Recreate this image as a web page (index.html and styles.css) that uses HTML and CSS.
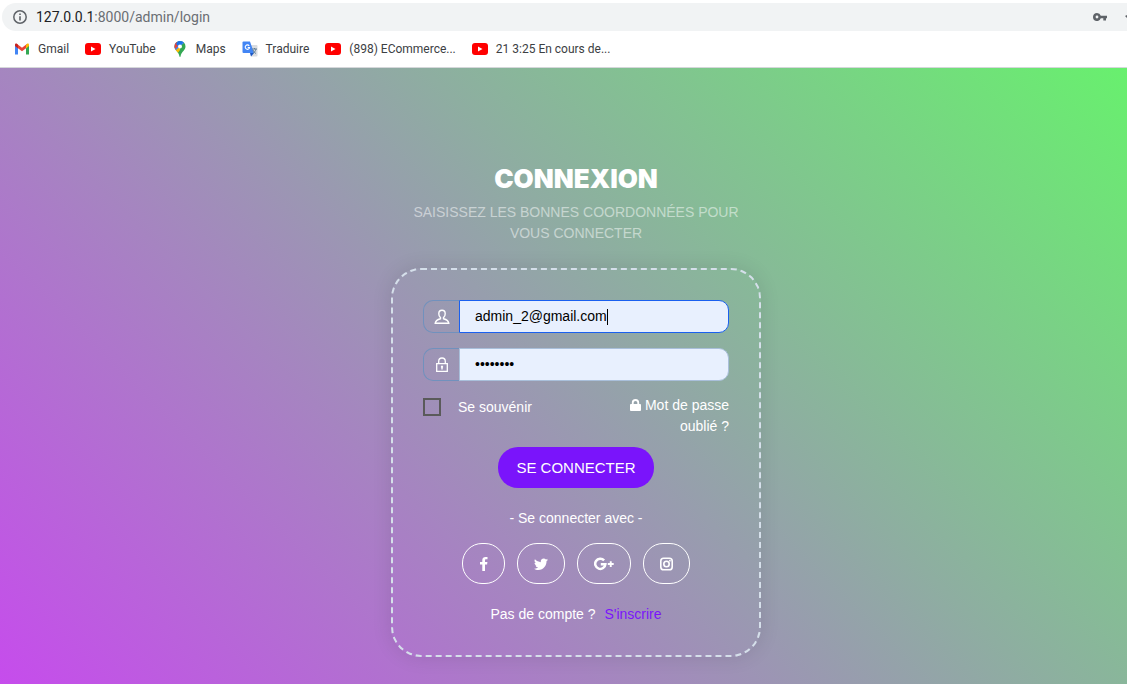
FILE: index.html
```html
<!DOCTYPE html>
<html lang="fr">
<head>
<meta charset="utf-8">
<title>Connexion</title>
<link rel="stylesheet" href="styles.css">
</head>
<body>
<svg class="sprite" aria-hidden="true">
  <symbol id="youtube" viewBox="0 0 16 12">
    <rect width="16" height="12" rx="3" fill="#f00"/>
    <path d="M6 3.500v5l4.500-2.500z" fill="#fff"/>
  </symbol>
</svg>
<header class="browser">
  <div class="address">
    <svg class="info" viewBox="0 0 14 14"><circle cx="7" cy="7" r="6.200" fill="none" stroke="#5f6368" stroke-width="1.500"/><path d="M6.200 6.200h1.600v4.300H6.200zM6.200 3.500h1.600v1.600H6.200z" fill="#5f6368"/></svg>
    <span class="url"><span class="host">127.0.0.1</span>:8000/admin/login</span>
    <svg class="key" viewBox="0 0 14 8"><path fill-rule="evenodd" d="M4 0a4 4 0 0 1 3.800 2.700H14v2.600h-1V7.500h-2.700V5.300H7.800A4 4 0 1 1 4 0zm0 2.600a1.400 1.400 0 1 0 0 2.800 1.400 1.400 0 0 0 0-2.800z" fill="#5f6368"/></svg>
    <svg class="star" viewBox="0 0 2 6"><path d="M0 2l2-1v3z" fill="#5f6368"/></svg>
  </div>
  <nav class="bookmarks">
    <a class="bookmark" href="#"><svg viewBox="0 0 16 16"><path d="M1 4v9.500h3V7z" fill="#4285f4"/><path d="M12 7v6.500h3V4z" fill="#34a853"/><path d="M1 3.500 2.800 2.700 8 6.700l5.200-4L12 7.200l-4 3-4-3z" fill="#ea4335"/><path d="M12 4v3.500L15 5V3.600c0-1-1.200-1.400-1.900-.8z" fill="#fbbc04"/><path d="M4 4v3.500L1 5V3.600c0-1 1.200-1.400 1.900-.8z" fill="#c5221f"/></svg>Gmail</a>
    <a class="bookmark" href="#"><svg viewBox="0 -2 16 16"><use href="#youtube" width="16" height="12"/></svg>YouTube</a>
    <a class="bookmark maps" href="#"><svg viewBox="0 0 16 16"><clipPath id="pin"><path d="M8 0a5.500 5.500 0 0 0-5.500 5.500C2.500 9.500 7 11 7.400 15.300c.1.900 1.100.9 1.200 0C9 11 13.500 9.500 13.500 5.500A5.500 5.500 0 0 0 8 0z"/></clipPath><g clip-path="url(#pin)"><path d="M0 0h16v16H0z" fill="#34a853"/><path d="M0 9 5 7l3-1v3l-3 4z" fill="#fbbc04"/><path d="M0 0h14L3.500 9.500H0z" fill="#4285f4"/><path d="M0 0h4l3 4-5 5H0z" fill="#ea4335"/><path d="M7-1l-3 4 3 3 5-6z" fill="#1a73e8"/></g><circle cx="8" cy="5.500" r="2" fill="#fff"/></svg>Maps</a>
    <a class="bookmark" href="#"><svg viewBox="0 0 16 16"><path d="M6 4h8.500q1 0 1 1v9.500q0 1-1 1H9z" fill="#dadce0"/><path d="M1.500.5H8l4 11.500H1.500q-1 0-1-1v-9.500q0-1 1-1z" fill="#4285f4"/><path d="M8 12h4l-3 3.500z" fill="#1a56c4"/><path d="M7.200 4.800A2.200 2.200 0 1 0 7.600 6.500H5.700" fill="none" stroke="#fff" stroke-width="1.100"/><path d="M10 8h5M12.500 7v1M14 8c-.5 2-2 4-3 4.500M11 9c.5 1.500 2 3 3 3.500" fill="none" stroke="#5f7d95"/></svg>Traduire</a>
    <a class="bookmark" href="#"><svg viewBox="0 -2 16 16"><use href="#youtube" width="16" height="12"/></svg>(898) ECommerce...</a>
    <a class="bookmark" href="#"><svg viewBox="0 -2 16 16"><use href="#youtube" width="16" height="12"/></svg>21 3:25 En cours de...</a>
  </nav>
</header>
<main class="page">
  <section class="login">
    <h1 class="title">CONNEXION</h1>
    <p class="subtitle">SAISISSEZ LES BONNES COORDONNÉES POUR VOUS CONNECTER</p>
    <form class="card">
      <div class="fields">
        <div class="field">
          <label class="addon" for="email" aria-label="Email"><svg viewBox="0 0 16 16"><path d="M8 1.200c-2 0-3.200 1.400-3.200 3.500 0 1.600.7 3.100 1.700 3.900v1.100C4 10.300 1.500 11.300 1.200 14.300h13.600c-.3-3-2.800-4-5.300-4.600V8.600c1-.8 1.700-2.300 1.700-3.900 0-2.100-1.200-3.500-3.200-3.500z" fill="none" stroke="#fff" stroke-width="1.400"/></svg></label>
          <span class="control focused"><input class="input" id="email" type="text" size="18" value="admin_2@gmail.com"><span class="caret"></span></span>
        </div>
        <div class="field">
          <label class="addon" for="password" aria-label="Mot de passe"><svg viewBox="0 0 16 16"><path d="M2.700 6.700h10.600v7.600H2.700zM4.700 6.500V4.300a3.300 3.300 0 0 1 6.600 0v2.200" fill="none" stroke="#fff" stroke-width="1.300"/><path d="M8 8.500a1.300 1.300 0 0 1 .7 2.300v1.700H7.300v-1.700A1.300 1.300 0 0 1 8 8.500z" fill="#fff"/></svg></label>
          <span class="control"><input class="input" id="password" type="password" value="password"></span>
        </div>
      </div>
      <div class="options">
        <label class="remember"><input class="check" type="checkbox">Se souvénir</label>
        <a class="forgot" href="#"><svg viewBox="0 0 12 13"><path fill-rule="evenodd" d="M1 5.500h1V4a4 4 0 0 1 8 0v1.500h1q1 0 1 1V12q0 1-1 1H1q-1 0-1-1V6.500q0-1 1-1zm3 0h4V4a2 2 0 0 0-4 0z" fill="#fff"/></svg> Mot de passe oublié ?</a>
      </div>
      <button class="submit" type="submit">SE CONNECTER</button>
      <p class="with">- Se connecter avec -</p>
      <div class="social">
        <a class="round" href="#" aria-label="Facebook"><svg width="9" height="16" viewBox="0 0 9 16"><path d="M8.500 1v2.300H7.200C6.200 3.300 6 3.800 6 4.500V6h2.400l-.3 2.500H6V15H3.300V8.500H1V6h2.300V4.100C3.300 2 4.600.9 6.500.9c.9 0 1.700.1 2 .1z" fill="#fff"/></svg></a>
        <a class="round" href="#" aria-label="Twitter"><svg width="14" height="16" viewBox="0 0 14 16"><path d="M14 3.800c-.4.600-.9 1.100-1.500 1.500.2 4-2.800 8.700-8.200 8.700-1.600 0-3.100-.5-4.300-1.300 1.500.2 3-.2 4.200-1.100-1.300 0-2.300-.9-2.700-2h1.300C1.400 9.300.5 8.200.5 6.800c.4.200.8.300 1.300.3C.6 6.200.1 4.600.9 3.300a8 8 0 0 0 5.900 3C6.300 4.200 8 2.500 9.800 2.500c.8 0 1.600.3 2.100.9.600-.1 1.300-.4 1.800-.7-.2.700-.6 1.200-1.200 1.600.5-.1 1-.2 1.500-.5z" fill="#fff"/></svg></a>
        <a class="round" href="#" aria-label="Google Plus"><svg width="20" height="16" viewBox="0 0 20 16"><path d="M10.100 4.400A5.100 5.100 0 1 0 11.400 8.200H6.800" fill="none" stroke="#fff" stroke-width="2.500"/><path d="M15.800 5.200h1.900v1.900h2v1.900h-2v1.900h-1.900V9h-2V7.100h2z" fill="#fff"/></svg></a>
        <a class="round" href="#" aria-label="Instagram"><svg width="13" height="16" viewBox="0 0 13 16"><rect x=".8" y="2.300" width="11.400" height="11.400" rx="2.800" fill="none" stroke="#fff" stroke-width="1.600"/><circle cx="6.500" cy="8" r="2.700" fill="none" stroke="#fff" stroke-width="1.600"/><circle cx="9.900" cy="4.700" r=".9" fill="#fff"/></svg></a>
      </div>
      <p class="signup">Pas de compte ? <a class="signup-link" href="#">S'inscrire</a></p>
    </form>
  </section>
</main>
</body>
</html>
```
FILE: styles.css
```css
* { box-sizing: border-box; }
body {
  margin: 0;
  min-height: 100vh;
  display: flex;
  flex-direction: column;
  overflow: hidden;
  font: 14px/21px "Liberation Sans", Arial, sans-serif;
  color: #fff;
}
a { color: inherit; text-decoration: none; }
p, h1 { margin: 0; }
.sprite { position: absolute; width: 0; height: 0; }
.browser {
  background: #fff;
  border-bottom: 1px solid #d5d7da;
  padding: 3px 0 0 2px;
}
.address {
  display: flex;
  align-items: center;
  height: 28px;
  padding-left: 11px;
  border-radius: 14px 0 0 14px;
  background: #f1f3f4;
  font: 14px/20px Roboto, sans-serif;
  color: #6a6e73;
}
.info { width: 14px; height: 14px; margin-right: 9px; }
.host { color: #202124; }
.key { width: 14px; height: 8px; margin-left: auto; }
.star { width: 2px; height: 6px; margin-left: 18px; }
.bookmarks {
  display: flex;
  align-items: center;
  height: 36px;
  padding-left: 12px;
  gap: 16px;
  font: 12px/16px Roboto, sans-serif;
  color: #3c4043;
}
.bookmark { display: flex; align-items: center; gap: 8px; white-space: nowrap; }
.bookmark svg { width: 16px; height: 16px; }
.page {
  flex: 1;
  display: flex;
  justify-content: center;
  padding: 97px 0 27px 25px;
  background: linear-gradient(45deg, #c64cec, #68f06e);
}
.login { width: 370px; text-align: center; }
.title { font: 900 26px/28px Inter, "Liberation Sans", sans-serif; }
.subtitle { padding: 9px 20px 0; color: rgba(255, 255, 255, .5); }
.card {
  margin-top: 24px;
  padding: 30px;
  border: 2px dashed #d5dfea;
  border-radius: 30px;
  box-shadow: 0 0 20px rgba(0, 0, 0, .1);
}
.fields { display: grid; gap: 15px; }
.field { display: flex; height: 33px; }
.addon {
  display: flex;
  align-items: center;
  justify-content: center;
  width: 36px;
  border: 1px solid #7191bd;
  border-right: 0;
  border-radius: 10px 0 0 10px;
}
.addon svg { width: 16px; height: 16px; }
.control {
  flex: 1;
  display: flex;
  align-items: center;
  padding: 0 15px;
  background: #e8f0fe;
  border: 1px solid #a9bfda;
  border-radius: 0 10px 10px 0;
}
.focused { border-color: #1a60ef; }
.input {
  min-width: 0;
  padding: 0;
  border: 0;
  outline: 0;
  background: none;
  font: inherit;
  color: #000;
  field-sizing: content;
}
.caret { width: 1px; height: 16px; background: #000; }
.options { display: flex; justify-content: space-between; margin-top: 14px; }
.remember { display: flex; align-items: center; gap: 17px; height: 24px; }
.check {
  appearance: none;
  width: 18px;
  height: 18px;
  margin: 0;
  border: 2px solid #5a5a5a;
}
.forgot { width: 110px; text-align: right; }
.forgot svg { width: 11px; height: 12px; vertical-align: -1px; }
.submit {
  height: 41px;
  margin-top: 10px;
  padding: 0 18px;
  border: 0;
  border-radius: 20px;
  background: #7a14fb;
  color: #fff;
  font: 15px/24px "Liberation Sans", Arial, sans-serif;
}
.with { margin-top: 20px; }
.social { display: flex; justify-content: center; gap: 12px; margin-top: 14px; }
.round {
  display: flex;
  align-items: center;
  height: 41px;
  padding: 0 16px;
  border: 1px solid #fff;
  border-radius: 20px;
}
.signup { margin-top: 20px; }
.signup-link { margin-left: 5px; color: #7a14fb; }
```
